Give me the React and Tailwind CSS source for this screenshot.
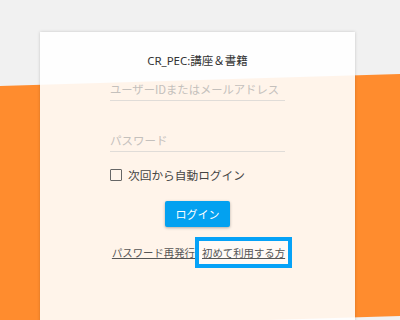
import React from 'react';

const jp = { fontFamily: '"Noto Sans CJK JP", "Noto Sans", sans-serif' };

export default function App() {
  return (
    <div className="relative h-[320px] w-[400px] overflow-hidden bg-[#f1f1f1]" style={jp}>
      {/* tilted orange band behind the card */}
      <div className="absolute left-[-40px] top-[80px] h-[242px] w-[480px] -rotate-[1.72deg] bg-[#ff8c2e]" />

      <div className="relative ml-[40px] mt-[32px] h-[300px] w-[315px] bg-white/90 shadow-[0_0_3px_rgba(0,0,0,0.18)]">
        <div className="flex flex-col items-center">
          <h1 className="mt-[19px] text-[11.5px] leading-[20px] text-[#333]" style={{ fontFamily: '"Noto Sans", "Noto Sans CJK JP", sans-serif' }}>
            CR_PEC:講座＆書籍
          </h1>

          <input
            type="text"
            placeholder="ユーザーIDまたはメールアドレス"
            className="mt-[4px] h-[26px] w-[175px] border-b border-[#e0dcd8] bg-transparent pt-[3px] text-[11.3px] outline-none placeholder:text-[#c4c0bc]"
          />
          <input
            type="password"
            placeholder="パスワード"
            className="mt-[25px] h-[26px] w-[175px] border-b border-[#e0dcd8] bg-transparent pt-[3px] text-[11.5px] outline-none placeholder:text-[#c4c0bc]"
          />

          <label className="mt-[15px] flex w-[175px] items-center gap-[6px] text-[11.7px] leading-[16px] text-[#444]">
            <span className="box-border inline-block h-[12px] w-[12px] rounded-[1px] border-[1.5px] border-[#666]" />
            次回から自動ログイン
          </label>

          <button className="mt-[18px] h-[26px] w-[65px] rounded-[2px] bg-[#03a1f0] text-[11px] text-white shadow-[0_1px_3px_rgba(0,0,0,0.3)]">
            ログイン
          </button>

          <div className="mt-[10px] flex items-center pl-[9px] text-[10.4px] leading-[14px] text-[#555]">
            <a href="#" className="underline">パスワード再発行</a>
            <a href="#" className="border-[4px] border-[#06a2f7] bg-[#fffaf6] px-[3px] py-[4.5px] underline">初めて利用する方</a>
          </div>
        </div>
      </div>
    </div>
  );
}
